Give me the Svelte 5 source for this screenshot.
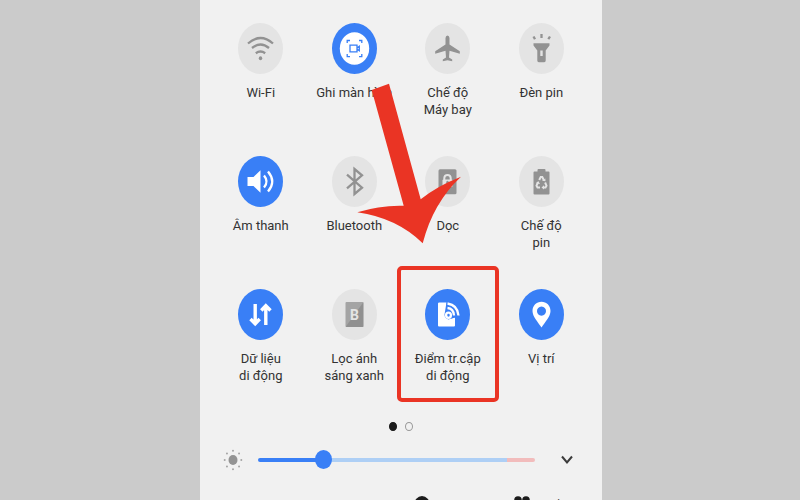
<script lang="ts">
  type Tile = { id: string; label: string[]; on: boolean; highlighted?: boolean }

  let tiles: Tile[] = $state([
    { id: 'wifi', label: ['Wi-Fi'], on: false },
    { id: 'record', label: ['Ghi màn hình'], on: true },
    { id: 'plane', label: ['Chế độ', 'Máy bay'], on: false },
    { id: 'torch', label: ['Đèn pin'], on: false },
    { id: 'sound', label: ['Âm thanh'], on: true },
    { id: 'bluetooth', label: ['Bluetooth'], on: false },
    { id: 'rotation', label: ['Dọc'], on: false },
    { id: 'battery', label: ['Chế độ', 'pin'], on: false },
    { id: 'data', label: ['Dữ liệu', 'di động'], on: true },
    { id: 'bluelight', label: ['Lọc ánh', 'sáng xanh'], on: false },
    { id: 'hotspot', label: ['Điểm tr.cập', 'di động'], on: true, highlighted: true },
    { id: 'location', label: ['Vị trí'], on: true },
  ])

  let brightness = $state(22)
  let page = $state(0)
</script>

<main class="page">
  <div class="panel">
    <div class="tiles">
      {#each tiles as tile (tile.id)}
        <button
          class="tile"
          class:on={tile.on}
          class:highlighted={tile.highlighted}
          aria-pressed={tile.on}
          onclick={() => (tile.on = !tile.on)}>
          <svg class="icon" viewBox="-22.5 -25.5 45 51" aria-hidden="true">
            <ellipse class="disc" rx="22.5" ry="25.5" />
            {#if tile.id === 'wifi'}
              <g class="line">
                <path d="M-12.5-5Q0-16 12.500-5M-8.500-.5Q0-7.500 8.500-.5M-4.700 4.700Q0 1.300 4.700 4.700" />
              </g>
              <ellipse class="fill" cy="9.700" rx="1.700" ry="2" />
            {:else if tile.id === 'record'}
              <ellipse class="fill" rx="14.700" ry="16.200" />
              <path
                class="cut-line"
                d="M-7.300-5.500V-8H-4.500M4.500-8H7.300V-5.500M7.300 5.500V8.200H4.500M-4.500 8.200H-7.300V5.500M-4.500-3.300H2.500V3.300H-4.500ZM2.800-.8L4.800-2.300V2.300L2.800.8" />
            {:else if tile.id === 'plane'}
              <path
                class="fill"
                d="M-2-10.500Q-1.800-13 0-13Q1.800-13 2-10.500V-4L12.300 2.800V5.300L2 2.300L1.500 9L4.700 11V12.800L0 11.800L-4.700 12.800V11L-1.500 9L-2 2.300L-12.300 5.300V2.800L-2-4Z" />
            {:else if tile.id === 'torch'}
              <path
                class="fill"
                fill-rule="evenodd"
                d="M-8-5.300H8V-3L4.200 2V12Q4.200 13.700 2.700 13.700H-2.700Q-4.200 13.700-4.200 12V2L-8-3ZM-1.200 2V7.500H1.200V2Z" />
              <path class="line" d="M0-14.500V-10.500M-8-12L-6.500-9.300M8.500-12L6.800-9.300" />
            {:else if tile.id === 'sound'}
              <path class="fill" d="M-13-4.500H-7L0-11.200V11.200L-7 4.500H-13Z" />
              <path class="line" d="M3.500-6Q8.500 0 3.500 6M7.500-10Q16 0 7.500 10" />
            {:else if tile.id === 'bluetooth'}
              <path class="line" d="M-7.500-6.800L7.500 6.200L0 12.500V-12.500L7.500-6.200L-7.500 6.800" />
            {:else if tile.id === 'rotation'}
              <rect class="fill" x="-9" y="-12.300" width="18" height="25" rx="1.500" />
              <path class="cut-line thick" d="M-3.200-1.500V-3.500Q-3-6.500 0-6.500Q3-6.500 3.200-3.500V-1.500" />
              <rect class="cut" x="-5" y="-2" width="10" height="7.500" rx="1" />
              <ellipse class="fill" cy="1" rx="1.300" ry="1.800" />
            {:else if tile.id === 'battery'}
              <path
                class="fill"
                d="M-4-10V-11.500Q-4-12.500-3-12.500H3Q4-12.500 4-11.500V-10H7Q8-10 8-9V12Q8 13 7 13H-7Q-8 13-8 12V-9Q-8-10-7-10Z" />
              <path class="cut-line thick" d="M-2.300-1.500L-.8-4.500H.8L2.300-1.500M3.600 1L5 4.200L4 6H1.500M-1.500 6H-4L-5 4.200L-3.600 1" />
              <path class="cut" d="M.5-.8L3.800-3L4-.3ZM2.500 3.800V8L0 6ZM-5.500 1.800L-3.200-.5L-1.500 2.500Z" />
            {:else if tile.id === 'data'}
              <path class="line bold" d="M-5.300-10.500V9M-10 4.500L-5.300 9.300L-.8 4.500M5.300 10.500V-8.500M.8-4L5.300-8.800L10-4" />
            {:else if tile.id === 'bluelight'}
              <rect class="fill light" x="-9" y="-12.500" width="18" height="25" rx="1" />
              <path class="shade" d="M9-12.500V12.500H-9Z" />
              <text class="letter" y="5">B</text>
            {:else if tile.id === 'hotspot'}
              <path class="fill" d="M-8.300-12H-1V0L4 4L7.500 3V11Q7.500 12 6.500 12H-8.500Q-9.500 12-9.500 11V-11Q-9.500-12-8.300-12Z" />
              <path class="cut" d="M-1-12H12V3H7L1 5Q-3 4-3 0Z" />
              <path class="line" d="M0-6.500Q6-6 6.500 1M0-11Q10-9.500 11 1" />
              <ellipse class="line" cx="1" cy=".7" rx="2.400" ry="2.600" />
            {:else if tile.id === 'location'}
              <path
                class="fill"
                fill-rule="evenodd"
                d="M0 13C-3.500 7.500-9 2-9-3.500C-9-9-5-12.800 0-12.800S9-9 9-3.500C9 2 3.500 7.500 0 13ZM0-8C-2.800-8-4.500-5.800-4.500-3.500S-2.800 1.200 0 1.200S4.500-1.200 4.500-3.500S2.800-8 0-8Z" />
            {/if}
          </svg>
          <span class="label">
            {#each tile.label as line}
              <span>{line}</span>
            {/each}
          </span>
        </button>
      {/each}
    </div>

    <div class="dots">
      {#each [0, 1] as n}
        <button class="dot" class:current={page === n} aria-label="Trang {n + 1}" onclick={() => (page = n)}></button>
      {/each}
    </div>

    <div class="brightness">
      <svg class="sun" viewBox="-10 -11 20 22" aria-hidden="true">
        <ellipse rx="4.500" ry="5" />
        <ellipse class="rays" rx="8.300" ry="9.300" pathLength="80" />
      </svg>
      <input
        type="range"
        min="0"
        max="100"
        aria-label="Độ sáng"
        bind:value={brightness}
        style="--value: {brightness}%" />
      <button class="expand" aria-label="Mở rộng">
        <svg viewBox="0 0 14 10" aria-hidden="true"><path d="M2 1.500L7 7.500L12 1.500" /></svg>
      </button>
    </div>

    <div class="shortcuts">
      <button class="shortcut">
        <svg viewBox="0 0 16 18" aria-hidden="true">
          <ellipse cx="8" cy="9" rx="8" ry="9" />
          <path class="play" d="M6 5.500L12 9L6 12.500Z" />
        </svg>
        Phương tiện
      </button>
      <button class="shortcut">
        <svg viewBox="0 0 16 18" aria-hidden="true">
          <circle cx="4" cy="4" r="3.800" />
          <circle cx="12" cy="4" r="3.800" />
          <circle cx="4" cy="13" r="3.800" />
          <circle cx="12" cy="13" r="3.800" />
        </svg>
        Thiết bị
      </button>
    </div>

    <!-- arrow pointing at the hotspot tile -->
    <svg class="arrow" viewBox="357 83 104 161" aria-hidden="true">
      <path
        d="M371.700 90L389 83.700L420.700 199.300Q437 186 461 176.700Q433 203 422.700 243.300Q397 218 357.300 212.300Q380 205 403.700 205.700Z" />
    </svg>
  </div>
</main>

<style>
  :global(body) {
    margin: 0;
    background: #cbcbcb;
  }

  .page {
    height: 100vh;
    overflow: hidden;
    padding-left: 2px;
    display: flex;
    justify-content: center;
    background: #cbcbcb;
    font-family: Roboto, 'Noto Sans', sans-serif;
    color: #333;
  }

  .panel {
    position: relative;
    width: 100%;
    max-width: 402px;
    box-sizing: border-box;
    padding: 23px 14px 0;
    background: #f1f1f1;
  }

  button {
    padding: 0;
    border: 0;
    background: none;
    font: inherit;
    color: inherit;
    cursor: pointer;
  }

  .tiles {
    display: grid;
    grid-template-columns: repeat(4, 1fr);
    grid-auto-rows: 133px;
  }

  .tile {
    position: relative;
    display: flex;
    flex-direction: column;
    align-items: center;
    gap: 10px;
  }

  .icon {
    width: 45px;
    height: 51px;
    --ink: #929292;
    --ground: #e4e4e4;
  }

  .on .icon {
    --ink: #fff;
    --ground: #397ff6;
  }

  .disc,
  .cut {
    fill: var(--ground);
  }

  .fill {
    fill: var(--ink);
  }

  .fill.light {
    fill: #a4a4a4;
  }

  .line,
  .cut-line {
    fill: none;
    stroke: var(--ink);
    stroke-width: 2.3;
  }

  .line.bold {
    stroke-width: 3.4;
  }

  .cut-line {
    stroke: var(--ground);
    stroke-width: 1.3;
  }

  .cut-line.thick {
    stroke-width: 2;
  }

  .shade {
    fill: #000;
    opacity: 0.12;
  }

  .letter {
    fill: var(--ground);
    font-size: 14px;
    font-weight: 700;
    text-anchor: middle;
  }

  .label {
    display: flex;
    flex-direction: column;
    font-size: 13px;
    line-height: 17px;
    white-space: nowrap;
  }

  .highlighted::after {
    content: '';
    position: absolute;
    inset: -23px -4px 20px -4px;
    border: 4px solid #ea3424;
    border-radius: 5px;
  }

  .dots {
    display: flex;
    justify-content: center;
    gap: 8px;
  }

  .dot {
    box-sizing: border-box;
    width: 8px;
    height: 9px;
    border: 1px solid #999;
    border-radius: 50%;
  }

  .dot.current {
    border-color: #1c1c1c;
    background: #1c1c1c;
  }

  .brightness {
    display: flex;
    align-items: center;
    margin-top: 18px;
    padding: 0 14px 0 9px;
  }

  .sun {
    width: 20px;
    height: 22px;
    fill: #939393;
  }

  .rays {
    fill: none;
    stroke: #a5a5a5;
    stroke-width: 2;
    stroke-linecap: round;
    stroke-dasharray: 0 10;
  }

  input {
    appearance: none;
    flex: 1;
    min-width: 0;
    height: 20px;
    margin: 0 25px 0 15px;
    background: none;
  }

  input::-webkit-slider-runnable-track {
    height: 4px;
    border-radius: 2px;
    background:
      linear-gradient(#397ff6, #397ff6) 0 0 / var(--value) 100% no-repeat,
      linear-gradient(to right, #aecff5 90%, #f2bcbc 90%);
  }

  input::-webkit-slider-thumb {
    appearance: none;
    width: 17px;
    height: 19px;
    margin-top: -8px;
    border-radius: 50%;
    background: #397ff6;
  }

  .expand {
    display: flex;
  }

  .expand svg {
    width: 14px;
    height: 10px;
    fill: none;
    stroke: #3c3c3c;
    stroke-width: 2;
  }

  .shortcuts {
    display: flex;
    justify-content: flex-end;
    gap: 16px;
    margin-top: 25px;
    padding-right: 14px;
  }

  .shortcut {
    display: flex;
    align-items: center;
    gap: 8px;
    font-size: 11px;
    line-height: 18px;
    white-space: nowrap;
  }

  .shortcut svg {
    width: 16px;
    height: 18px;
    fill: #1c1c1c;
  }

  .shortcut .play {
    fill: #f1f1f1;
  }

  .arrow {
    position: absolute;
    top: 83px;
    left: 157px;
    width: 104px;
    height: 161px;
    fill: #ea3424;
    pointer-events: none;
  }
</style>
